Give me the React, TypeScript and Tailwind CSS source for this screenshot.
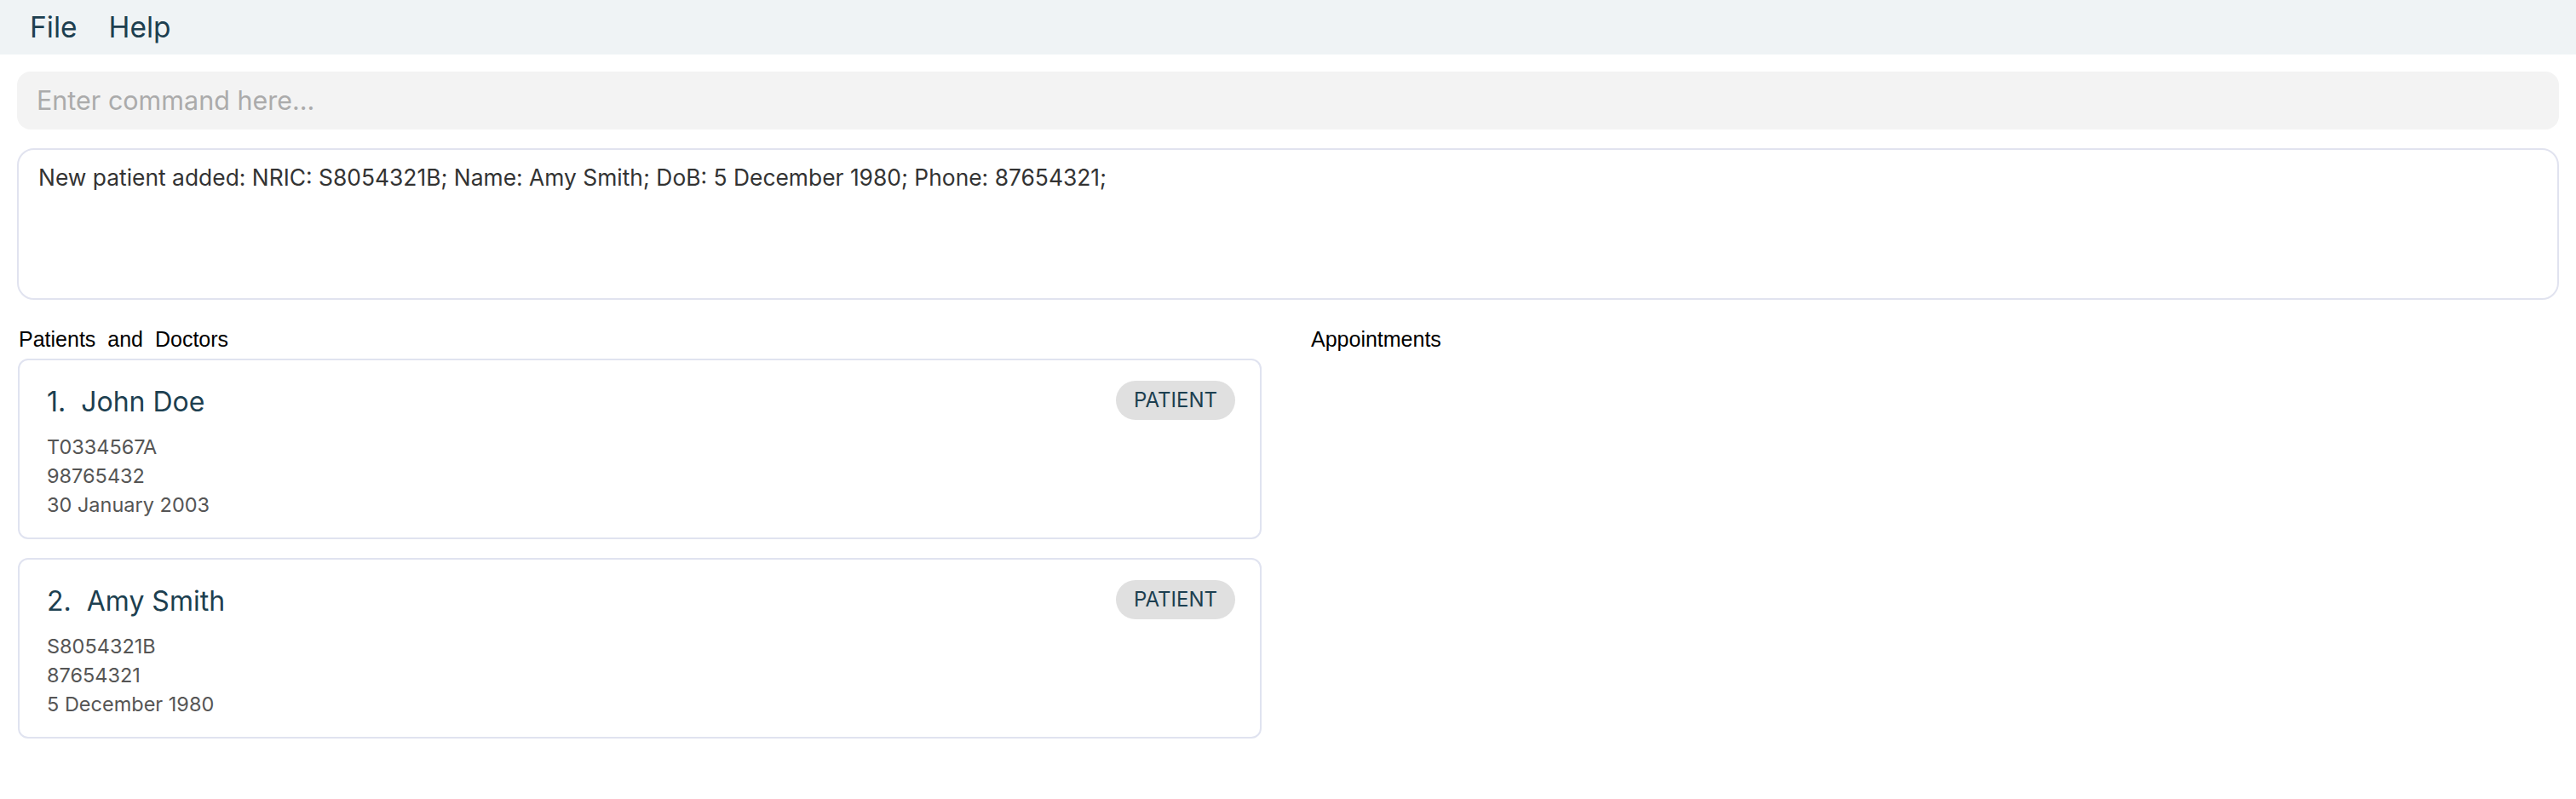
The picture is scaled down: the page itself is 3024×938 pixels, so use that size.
import React from 'react';

type Person = {
  index: number;
  name: string;
  nric: string;
  phone: string;
  dob: string;
  role: string;
};

const people: Person[] = [
  { index: 1, name: 'John Doe', nric: 'T0334567A', phone: '98765432', dob: '30 January 2003', role: 'PATIENT' },
  { index: 2, name: 'Amy Smith', nric: 'S8054321B', phone: '87654321', dob: '5 December 1980', role: 'PATIENT' },
];

const PersonCard = ({ person }: { person: Person }) => (
  <div className="h-[212px] rounded-[12px] border-2 border-[#e0e3f0] bg-white pl-[32px] pr-[29px] pt-[24px]">
    <div className="flex items-start justify-between">
      <h2 className="pt-[6px] text-[32px] leading-[38px] text-[#1d3f50] whitespace-pre">
        {`${person.index}.  ${person.name}`}
      </h2>
      <span className="flex h-[46px] items-center rounded-full bg-[#e0e0e0] px-[21px] text-[24px] text-[#1d3f50]">
        {person.role}
      </span>
    </div>
    <div className="mt-[15px] text-[23.5px] leading-[34px] text-[#555555]">
      <p>{person.nric}</p>
      <p>{person.phone}</p>
      <p>{person.dob}</p>
    </div>
  </div>
);

export default function App() {
  return (
    <div className="h-[938px] w-[3024px] bg-white font-['Inter',sans-serif]">
      <nav className="flex h-[64px] items-center gap-[37px] bg-[#eff3f5] pl-[35px] text-[33.5px] text-[#1d3f50]">
        <span>File</span>
        <span>Help</span>
      </nav>

      <div className="px-[20px] pt-[20px]">
        <div className="flex h-[68px] items-center rounded-[16px] bg-[#f3f3f3] px-[23px] text-[30.5px] text-[#ababab]">
          Enter command here...
        </div>

        <div className="mt-[22px] h-[178px] rounded-[20px] border-2 border-[#e1e3ef] px-[23px] pt-[12px] text-[26.4px] leading-[40px] text-[#333333]">
          New patient added: NRIC: S8054321B; Name: Amy Smith; DoB: 5 December 1980; Phone: 87654321;
        </div>
      </div>

      <div className="flex pt-[31px]">
        <section className="ml-[21px] w-[1460px]">
          <h3 className="pl-[1px] font-['Liberation_Sans',Arial,sans-serif] text-[25px] leading-[30px] text-black [word-spacing:7px]">
            Patients and Doctors
          </h3>
          <div className="mt-[8px] flex flex-col gap-[22px]">
            {people.map((p) => (
              <PersonCard key={p.index} person={p} />
            ))}
          </div>
        </section>
        <section className="ml-[58px]">
          <h3 className="font-['Liberation_Sans',Arial,sans-serif] text-[25px] leading-[30px] text-black">
            Appointments
          </h3>
        </section>
      </div>
    </div>
  );
}
